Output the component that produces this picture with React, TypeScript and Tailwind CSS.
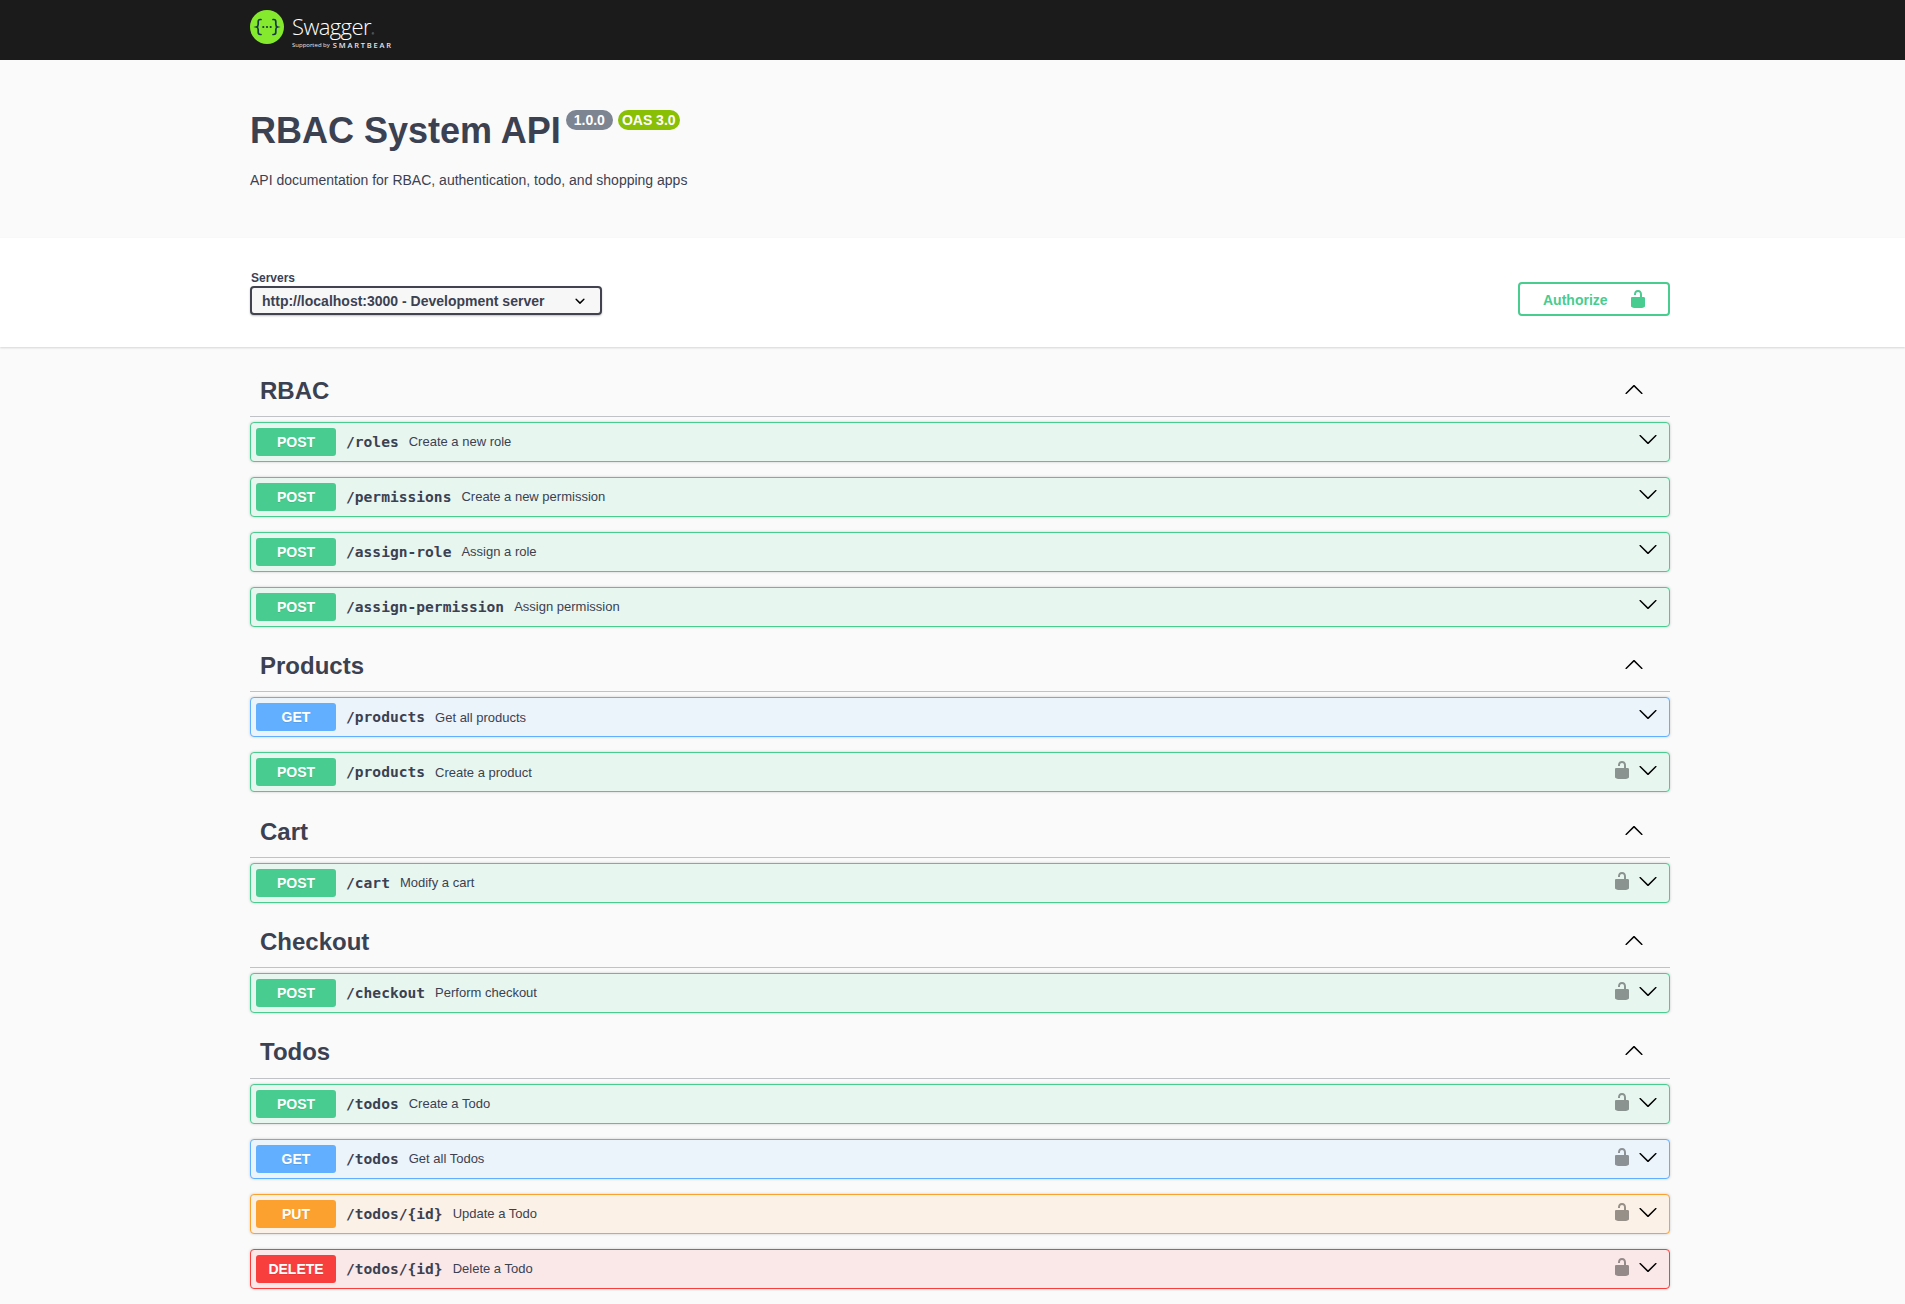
const ARROW_DOWN =
  "M17.418 6.109c.272-.268.709-.268.979 0s.271.701 0 .969l-7.908 7.83c-.27.268-.707.268-.979 0l-7.908-7.83c-.27-.268-.27-.701 0-.969.271-.268.709-.268.979 0L10 13.25l7.418-7.141z";
const ARROW_UP =
  "M17.418 14.908c.272.268.709.268.979 0s.271-.701 0-.969l-7.908-7.83c-.27-.268-.707-.268-.979 0l-7.908 7.83c-.27.268-.27.701 0 .969.271.268.709.268.979 0L10 7.766l7.418 7.142z";
const UNLOCKED =
  "M15.8 8H14V5.6C14 2.703 12.665 1 10 1 7.334 1 6 2.703 6 5.6V6h2v-.801C8 3.754 8.797 3 10 3c1.203 0 2 .754 2 2.199V8H4c-.553 0-1 .646-1 1.199V17c0 .549.428 1.139.951 1.307l1.197.387C5.672 18.861 6.55 19 7.1 19h5.8c.549 0 1.428-.139 1.951-.307l1.196-.387c.524-.167.953-.757.953-1.306V9.199C17 8.646 16.352 8 15.8 8z";

type Method = "POST" | "GET" | "PUT" | "DELETE";

interface Op {
  method: Method;
  path: string;
  summary: string;
  locked?: boolean;
}

const STYLES: Record<Method, { row: string; badge: string }> = {
  POST: { row: "border-[#49cc90] bg-[#e8f6f0]", badge: "bg-[#49cc90]" },
  GET: { row: "border-[#61affe] bg-[#ebf3fb]", badge: "bg-[#61affe]" },
  PUT: { row: "border-[#fca130] bg-[#fbf1e6]", badge: "bg-[#fca130]" },
  DELETE: { row: "border-[#f93e3e] bg-[#fae7e7]", badge: "bg-[#f93e3e]" },
};

const SECTIONS: { title: string; ops: Op[] }[] = [
  {
    title: "RBAC",
    ops: [
      { method: "POST", path: "/roles", summary: "Create a new role" },
      { method: "POST", path: "/permissions", summary: "Create a new permission" },
      { method: "POST", path: "/assign-role", summary: "Assign a role" },
      { method: "POST", path: "/assign-permission", summary: "Assign permission" },
    ],
  },
  {
    title: "Products",
    ops: [
      { method: "GET", path: "/products", summary: "Get all products" },
      { method: "POST", path: "/products", summary: "Create a product", locked: true },
    ],
  },
  {
    title: "Cart",
    ops: [{ method: "POST", path: "/cart", summary: "Modify a cart", locked: true }],
  },
  {
    title: "Checkout",
    ops: [{ method: "POST", path: "/checkout", summary: "Perform checkout", locked: true }],
  },
  {
    title: "Todos",
    ops: [
      { method: "POST", path: "/todos", summary: "Create a Todo", locked: true },
      { method: "GET", path: "/todos", summary: "Get all Todos", locked: true },
      { method: "PUT", path: "/todos/{id}", summary: "Update a Todo", locked: true },
      { method: "DELETE", path: "/todos/{id}", summary: "Delete a Todo", locked: true },
    ],
  },
];

function Icon({ d, className }: { d: string; className?: string }) {
  return (
    <svg viewBox="0 0 20 20" className={`w-5 h-5 shrink-0 ${className ?? ""}`}>
      <path d={d} />
    </svg>
  );
}

function Logo() {
  return (
    <div className="flex items-start gap-2 text-white">
      <svg viewBox="0 0 34 34" className="w-[34px] h-[34px] shrink-0">
        <circle cx="17" cy="17" r="17" fill="#85ea2d" />
        <g fill="none" stroke="#173647" strokeWidth="1.7" strokeLinecap="round">
          <path d="M11 9.5h-.8c-1.4 0-2 .8-2 2.2v2.6c0 1.5-.6 2.4-1.7 2.7 1.1.3 1.7 1.2 1.7 2.7v2.6c0 1.4.6 2.2 2 2.2h.8" />
          <path d="M23 9.5h.8c1.4 0 2 .8 2 2.2v2.6c0 1.5.6 2.4 1.7 2.7-1.1.3-1.7 1.2-1.7 2.7v2.6c0 1.4-.6 2.2-2 2.2H23" />
        </g>
        <g fill="#173647">
          <circle cx="13.3" cy="17" r="1.1" />
          <circle cx="17" cy="17" r="1.1" />
          <circle cx="20.7" cy="17" r="1.1" />
        </g>
      </svg>
      <div className="flex flex-col">
        <div className="flex items-start h-[30px]">
          <span className="font-['Open_Sans',sans-serif] font-light text-[22px] leading-[32px] tracking-[-0.6px]">
            Swagger
          </span>
          <span className="text-[3px] mt-[22px] ml-px text-gray-300">®</span>
        </div>
        <div className="flex items-center gap-[3px] mt-px font-['Open_Sans',sans-serif] leading-[8px] text-gray-200">
          <span className="text-[6px]">Supported by</span>
          <span className="text-[7.5px] font-semibold tracking-[1.8px]">SMARTBEAR</span>
        </div>
      </div>
    </div>
  );
}

function OpRow({ op }: { op: Op }) {
  const style = STYLES[op.method];
  return (
    <div className={`mb-[15px] h-10 flex items-center pl-[5px] pr-[11px] border rounded shadow-[0_0_3px_rgba(0,0,0,0.19)] ${style.row}`}>
      <span className={`w-20 h-7 flex items-center justify-center rounded-[3px] text-sm font-bold text-white [text-shadow:0_1px_0_rgba(0,0,0,0.1)] ${style.badge}`}>
        {op.method}
      </span>
      <span className="pl-2.5 font-['DejaVu_Sans_Mono',monospace] font-bold text-[14.6px] text-[#3b4151]">
        {op.path}
      </span>
      <span className="pl-2.5 text-[13px] text-[#3b4151]">{op.summary}</span>
      <div className={`ml-auto flex items-center gap-1.5 ${op.locked ? "pb-1" : "pb-1.5"}`}>
        {op.locked && <Icon d={UNLOCKED} className="fill-black opacity-40" />}
        <Icon d={ARROW_DOWN} className="fill-black" />
      </div>
    </div>
  );
}

export default function App() {
  return (
    <div className="min-h-screen bg-[#fafafa] text-[#3b4151] font-['Liberation_Sans',Arial,sans-serif] overflow-hidden">
      {/* Top bar */}
      <div className="h-[60px] bg-[#1b1b1b] pl-[250px] pt-2.5">
        <Logo />
      </div>

      {/* Info */}
      <div className="ml-[250px] w-[1420px] py-[50px]">
        <div className="flex items-start">
          <h2 className="mt-px text-4xl leading-10 font-bold">RBAC System API</h2>
          <span className="ml-[5px] h-5 px-2 flex items-center rounded-full bg-[#7d8492] text-sm font-bold text-white">1.0.0</span>
          <span className="ml-[5px] h-5 px-1 flex items-center rounded-full bg-[#89bf04] text-sm font-bold text-white">OAS 3.0</span>
        </div>
        <p className="mt-[21px] text-sm leading-4">API documentation for RBAC, authentication, todo, and shopping apps</p>
      </div>

      {/* Servers */}
      <div className="bg-white h-[108.6px] mb-5 pt-[30px] shadow-[0_1px_2px_0_rgba(0,0,0,0.15)]">
        <div className="ml-[250px] w-[1420px] h-12 flex items-end justify-between">
          <div className="flex flex-col mb-px">
            <span className="ml-px text-xs font-bold leading-[14px] mb-px">Servers</span>
            <div className="w-[352px] h-[29px] flex items-center justify-between pl-2.5 pr-2.5 border-2 border-[#41444e] rounded bg-[#f7f7f7] shadow-[0_1px_2px_0_rgba(0,0,0,0.25)] text-sm font-bold">
              <span>http://localhost:3000 - Development server</span>
              <svg viewBox="0 0 20 20" className="w-5 h-5 fill-black">
                <path d="M13.418 7.859a.695.695 0 0 1 .978 0 .68.68 0 0 1 0 .969l-3.908 3.83a.697.697 0 0 1-.979 0l-3.908-3.83a.68.68 0 0 1 0-.969.695.695 0 0 1 .978 0L10 11l3.418-3.141z" />
              </svg>
            </div>
          </div>
          <button className="w-[152px] h-[34px] flex items-center justify-between pl-[23px] pr-5 border-2 border-[#49cc90] rounded bg-transparent text-sm font-bold text-[#49cc90]">
            <span className="pt-0.5">Authorize</span>
            <Icon d={UNLOCKED} className="fill-[#49cc90]" />
          </button>
        </div>
      </div>

      {/* Operations */}
      <div className="ml-[250px] w-[1420px]">
        {SECTIONS.map((section) => (
          <div key={section.title}>
            <div className="h-[50.4px] mb-[5px] pl-2.5 pr-[26px] pb-px flex items-center justify-between border-b border-[#3b4151]/30">
              <h3 className="text-2xl font-bold">{section.title}</h3>
              <Icon d={ARROW_UP} className="fill-black mb-1" />
            </div>
            {section.ops.map((op) => (
              <OpRow key={op.method + op.path} op={op} />
            ))}
          </div>
        ))}
      </div>
    </div>
  );
}
